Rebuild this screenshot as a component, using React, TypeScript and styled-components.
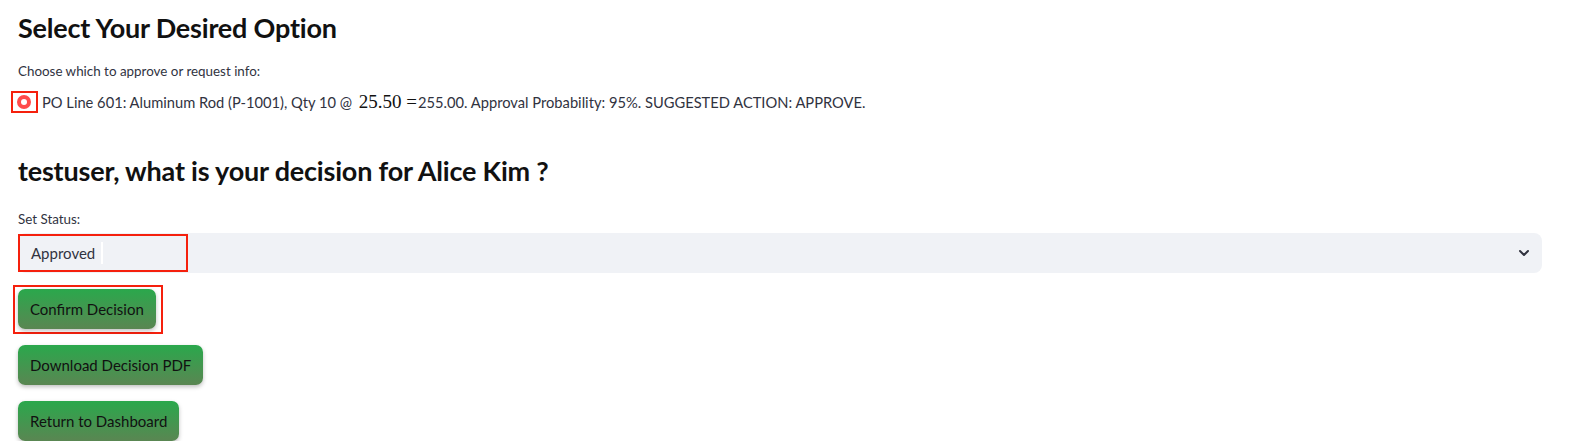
import React from 'react';
import styled, { createGlobalStyle } from 'styled-components';

const GlobalStyle = createGlobalStyle`
  body {
    margin: 0;
    background: #ffffff;
    font-family: 'Lato', 'Noto Sans', sans-serif;
    color: #31333f;
  }
`;

const Page = styled.div`
  padding: 10px 30px 0 18px;
  display: flex;
  flex-direction: column;
`;

const Heading = styled.h3<{ $top: number }>`
  margin: ${p => p.$top}px 0 0 0;
  font-size: 27px;
  font-weight: 700;
  color: #111;
  line-height: 36px;
  letter-spacing: -0.2px;
`;

const Label = styled.div<{ $top: number }>`
  margin-top: ${p => p.$top}px;
  font-size: 13.4px;
  color: #31333f;
  line-height: 18px;
`;

const RadioRow = styled.label`
  margin-top: 11px;
  margin-left: -7px;
  display: flex;
  align-items: center;
  gap: 4px;
  font-size: 14.7px;
  color: #31333f;
  line-height: 22px;
`;

const Marked = styled.span`
  border: 2px solid #f5200d;
  padding: 2px 5px 2px 4px;
  display: inline-flex;
`;

const RadioDot = styled.span`
  width: 14px;
  height: 14px;
  border-radius: 50%;
  background: #ff4b4b;
  display: inline-flex;
  align-items: center;
  justify-content: center;
  &::after {
    content: '';
    width: 6px;
    height: 6px;
    border-radius: 50%;
    background: #fff;
  }
`;

const MathText = styled.span`
  font-family: 'Liberation Serif', 'DejaVu Serif', serif;
  font-size: 19px;
  color: #111;
  margin: 0 1px 0 3px;
`;

const Select = styled.div`
  margin-top: 5px;
  height: 40px;
  background: #f0f2f6;
  border-radius: 8px;
  display: flex;
  align-items: center;
  justify-content: space-between;
  padding-right: 10px;
`;

const SelectValue = styled.div`
  display: flex;
  align-items: center;
  padding-left: 11px;
  box-sizing: border-box;
  width: 170px;
  height: 38px;
  border: 2px solid #f5200d;
  font-size: 15px;
  color: #31333f;
  &::after {
    content: '';
    width: 2px;
    height: 22px;
    background: #fff;
    margin-left: 6px;
  }
`;

const ButtonBox = styled.div<{ $marked?: boolean }>`
  align-self: flex-start;
  margin-top: 16px;
  ${p =>
    p.$marked
      ? 'border: 2px solid #f5200d; padding: 2px 5px 3px 3px; margin: 12px 0 -5px -5px;'
      : ''}
`;

const Button = styled.button`
  height: 40px;
  padding: 0 12px;
  border: none;
  border-radius: 7px;
  background: linear-gradient(180deg, #2aa84c 0%, #5a8652 100%);
  box-shadow: 0 2px 4px rgba(0, 0, 0, 0.25);
  font-family: 'Lato', 'Noto Sans', sans-serif;
  font-size: 15px;
  color: #111;
  cursor: pointer;
`;

function Chevron() {
  return (
    <svg width="16" height="16" viewBox="0 0 24 24" fill="none" stroke="#31333f" strokeWidth="3" strokeLinecap="round" strokeLinejoin="round">
      <path d="M6 9l6 6 6-6" />
    </svg>
  );
}

export default function App() {
  return (
    <>
      <GlobalStyle />
      <Page>
        <Heading $top={0}>Select Your Desired Option</Heading>
        <Label $top={16}>Choose which to approve or request info:</Label>
        <RadioRow>
          <Marked><RadioDot /></Marked>
          <span>
            PO Line 601: Aluminum Rod (P-1001), Qty 10 @ <MathText>25.50 =</MathText>255.00. Approval Probability: 95%. SUGGESTED ACTION: APPROVE.
          </span>
        </RadioRow>
        <Heading $top={40}>testuser, what is your decision for Alice Kim ?</Heading>
        <Label $top={21}>Set Status:</Label>
        <Select>
          <SelectValue>Approved</SelectValue>
          <Chevron />
        </Select>
        <ButtonBox $marked>
          <Button>Confirm Decision</Button>
        </ButtonBox>
        <ButtonBox>
          <Button>Download Decision PDF</Button>
        </ButtonBox>
        <ButtonBox>
          <Button>Return to Dashboard</Button>
        </ButtonBox>
      </Page>
    </>
  );
}
